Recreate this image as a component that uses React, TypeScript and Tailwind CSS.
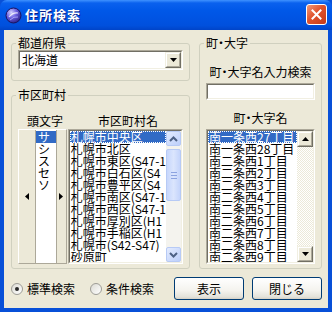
import React from "react";

const cities = [
  "札幌市中央区",
  "札幌市北区",
  "札幌市東区(S47-1",
  "札幌市白石区(S4",
  "札幌市豊平区(S4",
  "札幌市南区(S47-1",
  "札幌市西区(S47-1",
  "札幌市厚別区(H1",
  "札幌市手稲区(H1",
  "札幌市(S42-S47)",
  "砂原町",
];

const towns = [
  "南一条西27丁目",
  "南一条西28丁目",
  "南二条西1丁目",
  "南二条西2丁目",
  "南二条西3丁目",
  "南二条西4丁目",
  "南二条西5丁目",
  "南二条西6丁目",
  "南二条西7丁目",
  "南二条西8丁目",
  "南二条西9丁目",
];

const kana = ["サ", "シ", "ス", "セ", "ソ"];

function Dot() {
  return <span className="mx-[-3px]">・</span>;
}

function Sunken({ className, children }: { className?: string; children?: React.ReactNode }) {
  return (
    <div className={`border border-t-[#aca899] border-l-[#aca899] border-b-white border-r-white ${className ?? ""}`}>
      <div className="h-full w-full border border-t-[#716f64] border-l-[#716f64] border-b-[#f1efe2] border-r-[#f1efe2] bg-white overflow-hidden">
        {children}
      </div>
    </div>
  );
}

function Group({ label, className, children }: { label: React.ReactNode; className?: string; children?: React.ReactNode }) {
  return (
    <fieldset className={`border border-[#d0d0bf] rounded-[3px] min-w-0 ${className ?? ""}`}>
      <legend className="ml-[4px] px-[2px] text-[12px] leading-[12px] text-black">{label}</legend>
      {children}
    </fieldset>
  );
}

function XpArrow({ down }: { down?: boolean }) {
  return (
    <div className="w-[15px] h-[15px] shrink-0 rounded-[2px] border border-[#b7caf5] bg-[linear-gradient(135deg,#e3ebfe,#bccffb)] flex items-center justify-center">
      <svg width="9" height="6" viewBox="0 0 9 6">
        <path
          d={down ? "M1 1 L4.5 4.5 L8 1" : "M1 5 L4.5 1.5 L8 5"}
          fill="none"
          stroke="#4d6185"
          strokeWidth="2"
        />
      </svg>
    </div>
  );
}

function ClassicBtn({ children, className }: { children?: React.ReactNode; className?: string }) {
  return (
    <div className={`shrink-0 bg-[#ece9d8] border border-t-[#f1efe2] border-l-[#f1efe2] border-b-[#716f64] border-r-[#716f64] ${className ?? ""}`}>
      <div className="h-full w-full border border-t-white border-l-white border-b-[#aca899] border-r-[#aca899] flex items-center justify-center">
        {children}
      </div>
    </div>
  );
}

function Radio({ checked, label }: { checked?: boolean; label: string }) {
  return (
    <div className="flex items-center gap-[4px]">
      <div className="w-[12px] h-[12px] rounded-full border border-[#9d9c96] bg-[linear-gradient(135deg,#dcdbd4,#ffffff)] flex items-center justify-center">
        {checked && <div className="w-[4px] h-[4px] rounded-full bg-[#2a2a2a]" />}
      </div>
      <span className="text-[12px] leading-[12px]">{label}</span>
    </div>
  );
}

function XpButton({ label, className }: { label: string; className?: string }) {
  return (
    <div
      className={`h-[23px] rounded-[3px] border border-[#003c74] bg-[linear-gradient(180deg,#ffffff_0%,#f4f3ee_60%,#e3e2da_90%,#d6d0c5_100%)] flex items-center justify-center text-[12px] leading-[12px] ${className ?? ""}`}
    >
      {label}
    </div>
  );
}

function Row({ text, selected }: { text: string; selected?: boolean }) {
  return (
    <div
      className={`h-[12px] text-[12px] leading-[12px] pl-[1px] whitespace-nowrap ${
        selected ? "bg-[#316ac5] text-white outline outline-1 outline-dotted outline-[#ffffff] -outline-offset-1" : ""
      }`}
    >
      {text}
    </div>
  );
}

export default function App() {
  return (
    <div className="w-[332px] h-[312px] flex flex-col bg-[#0850d8] font-['Noto_Sans_CJK_JP',sans-serif] text-black overflow-hidden">
      {/* title bar */}
      <div className="h-[30px] shrink-0 flex items-center pl-[5px] pr-[5px] rounded-t-[7px] bg-[linear-gradient(180deg,#3f92ff_0%,#0a61ee_10%,#0058e8_35%,#0054e3_60%,#0050dd_85%,#0044c8_100%)]">
        <svg width="17" height="17" viewBox="0 0 17 17" className="shrink-0">
          <defs>
            <radialGradient id="g" cx="0.35" cy="0.3" r="0.8">
              <stop offset="0" stopColor="#d4d4ff" />
              <stop offset="0.45" stopColor="#6a5ee0" />
              <stop offset="1" stopColor="#22187a" />
            </radialGradient>
          </defs>
          <circle cx="8.5" cy="8.5" r="7.5" fill="url(#g)" stroke="#1a1460" strokeWidth="1" />
          <path d="M4 10 Q8 5 13 6" stroke="#ffffff" strokeWidth="1.2" fill="none" opacity="0.8" />
          <path d="M5 13 Q9 9 13 10" stroke="#b8b4ff" strokeWidth="1" fill="none" opacity="0.8" />
        </svg>
        <span className="ml-[3px] text-white font-bold text-[13px] leading-[14px] tracking-[1px] [text-shadow:1px_1px_0_#0a1e8a]">
          住所検索
        </span>
        <div className="flex-1" />
        <div className="w-[21px] h-[21px] rounded-[3px] border border-white bg-[linear-gradient(135deg,#f09a7a_0%,#e0532d_45%,#c53a18_100%)] flex items-center justify-center mt-[-2px]">
          <svg width="11" height="11" viewBox="0 0 11 11">
            <path d="M1.5 1.5 L9.5 9.5 M9.5 1.5 L1.5 9.5" stroke="#ffffff" strokeWidth="2" strokeLinecap="square" />
          </svg>
        </div>
      </div>

      {/* body */}
      <div className="flex-1 mx-[4px] mb-[4px] bg-[#ece9d8] flex flex-col pl-[7px] pr-[6px] pt-[7px]">
        <div className="flex gap-[9px] h-[232px]">
          {/* left column */}
          <div className="w-[179px] flex flex-col gap-[8px]">
            <Group label="都道府県" className="h-[44px]">
              <div className="px-[6px] pt-[1px]">
                <Sunken className="h-[20px]">
                  <div className="flex h-full items-center">
                    <span className="flex-1 pl-[2px] text-[12px] leading-[12px]">北海道</span>
                    <ClassicBtn className="w-[16px] h-full">
                      <svg width="7" height="4" viewBox="0 0 7 4">
                        <path d="M0 0 H7 L3.5 4 Z" fill="#000" />
                      </svg>
                    </ClassicBtn>
                  </div>
                </Sunken>
              </div>
            </Group>

            <Group label="市区町村" className="flex-1">
              <div className="px-[6px] pt-[14px] flex flex-col">
                <div className="flex gap-[1px] text-[12px] leading-[12px]">
                  <div className="w-[54px] text-center">頭文字</div>
                  <div className="flex-1 text-center">市区町村名</div>
                </div>
                <div className="flex gap-[1px] mt-[2px] h-[135px]">
                  {/* kana control */}
                  <div className="w-[54px] h-full flex border border-t-white border-l-white border-b-[#aca899] border-r-[#aca899]">
                    <div className="w-[16px] flex items-center justify-center">
                      <svg width="4" height="7" viewBox="0 0 4 7">
                        <path d="M4 0 V7 L0 3.5 Z" fill="#000" />
                      </svg>
                    </div>
                    <div className="w-[22px] h-full bg-white border-l border-r border-[#aca899] flex flex-col pt-[1px]">
                      {kana.map((k, i) => (
                        <div
                          key={k}
                          className={`h-[12px] text-[12px] leading-[12px] pl-[2px] ${
                            i === 0 ? "bg-[#316ac5] text-white" : ""
                          }`}
                        >
                          {k}
                        </div>
                      ))}
                    </div>
                    <div className="flex-1 flex items-center justify-center">
                      <svg width="4" height="7" viewBox="0 0 4 7">
                        <path d="M0 0 V7 L4 3.5 Z" fill="#000" />
                      </svg>
                    </div>
                  </div>
                  {/* city list */}
                  <Sunken className="flex-1 h-full">
                    <div className="flex h-full">
                      <div className="flex-1 min-w-0 overflow-hidden">
                        {cities.map((c, i) => (
                          <Row key={c} text={c} selected={i === 0} />
                        ))}
                      </div>
                      <div className="w-[15px] h-full bg-[#f4f3ee] flex flex-col">
                        <XpArrow />
                        <div className="flex-1 pt-[3px]">
                          <div className="h-[52px] rounded-[2px] border border-[#b7caf5] bg-[linear-gradient(90deg,#c6d6fc,#dbe5fd,#c4d4fb)] flex flex-col items-center justify-center gap-[2px]">
                            <div className="w-[6px] h-[1px] bg-[#8ca3e0]" />
                            <div className="w-[6px] h-[1px] bg-[#8ca3e0]" />
                            <div className="w-[6px] h-[1px] bg-[#8ca3e0]" />
                          </div>
                        </div>
                        <XpArrow down />
                      </div>
                    </div>
                  </Sunken>
                </div>
              </div>
            </Group>
          </div>

          {/* right column */}
          <Group
            label={
              <>
                町<Dot />大字
              </>
            }
            className="flex-1"
          >
            <div className="px-[6px] flex flex-col">
              <div className="mt-[17px] text-center text-[12px] leading-[12px]">
                町<Dot />大字名入力検索
              </div>
              <Sunken className="mt-[5px] h-[17px]" />
              <div className="mt-[12px] text-center text-[12px] leading-[12px]">
                町<Dot />大字名
              </div>
              <Sunken className="mt-[5px] h-[135px]">
                <div className="flex h-full">
                  <div className="flex-1 min-w-0 overflow-hidden">
                    {towns.map((t, i) => (
                      <Row key={t} text={t} selected={i === 0} />
                    ))}
                  </div>
                  <div className="w-[16px] h-full flex flex-col bg-[repeating-conic-gradient(#ffffff_0%_25%,#ece9d8_0%_50%)] bg-[length:2px_2px]">
                    <ClassicBtn className="w-[16px] h-[16px]">
                      <svg width="7" height="4" viewBox="0 0 7 4">
                        <path d="M0 4 H7 L3.5 0 Z" fill="#000" />
                      </svg>
                    </ClassicBtn>
                    <div className="flex-1" />
                    <ClassicBtn className="w-[16px] h-[16px]">
                      <svg width="7" height="4" viewBox="0 0 7 4">
                        <path d="M0 0 H7 L3.5 4 Z" fill="#000" />
                      </svg>
                    </ClassicBtn>
                  </div>
                </div>
              </Sunken>
            </div>
          </Group>
        </div>

        {/* bottom row */}
        <div className="flex items-center mt-[8px] h-[23px]">
          <div>
            <Radio checked label="標準検索" />
          </div>
          <div className="ml-[15px]">
            <Radio label="条件検索" />
          </div>
          <div className="flex-1" />
          <XpButton label="表示" className="w-[70px]" />
          <XpButton label="閉じる" className="w-[70px] ml-[8px]" />
        </div>
      </div>
    </div>
  );
}
